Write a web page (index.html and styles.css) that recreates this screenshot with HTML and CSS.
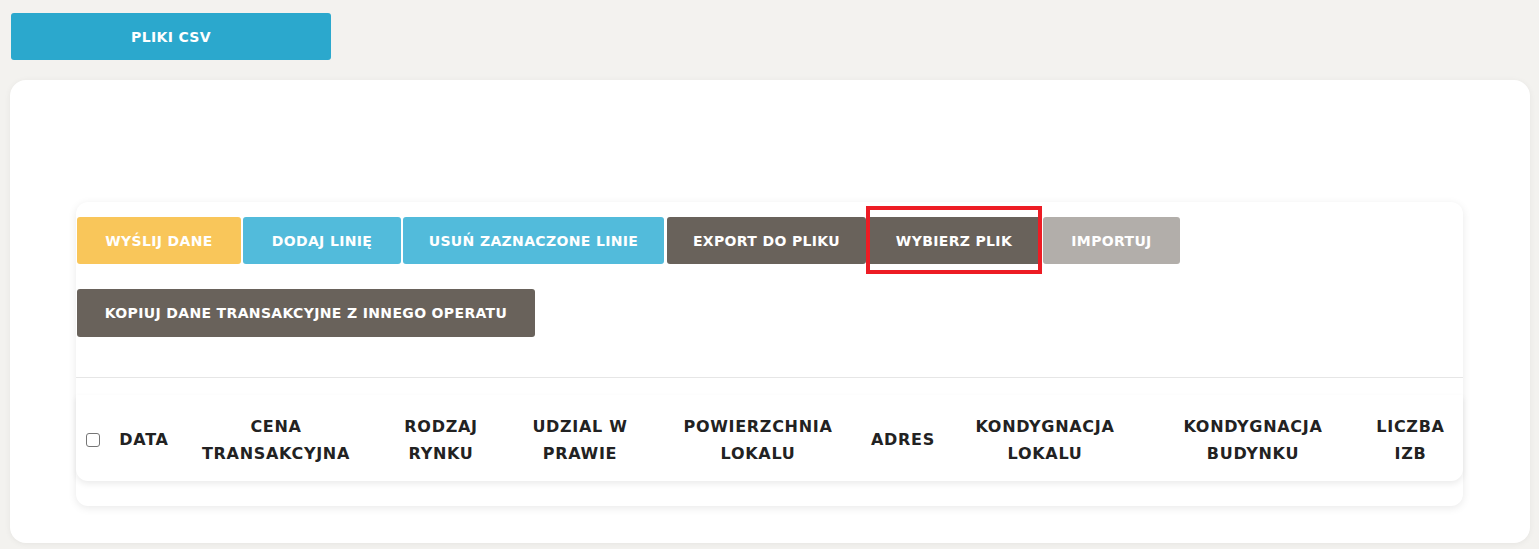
FILE: index.html
```html
<!DOCTYPE html>
<html lang="pl">
<head>
<meta charset="utf-8">
<title>Pliki CSV</title>
<link rel="stylesheet" href="styles.css">
</head>
<body>
  <div class="page">
    <button class="btn btn-csv">PLIKI CSV</button>
    <section class="panel">
      <div class="card">
        <div class="toolbar">
          <div class="btn-row">
            <button class="btn btn-yellow w-send">WYŚLIJ DANE</button>
            <button class="btn btn-blue w-add">DODAJ LINIĘ</button>
            <button class="btn btn-blue w-del">USUŃ ZAZNACZONE LINIE</button>
            <button class="btn btn-dark w-export">EXPORT DO PLIKU</button>
            <button class="btn btn-dark w-pick highlighted">WYBIERZ PLIK</button>
            <button class="btn btn-grey w-import">IMPORTUJ</button>
          </div>
          <div class="btn-row second">
            <button class="btn btn-dark w-copy">KOPIUJ DANE TRANSAKCYJNE Z INNEGO OPERATU</button>
          </div>
        </div>
        <div class="divider"></div>
        <div class="table-card">
          <div class="thead">
            <div class="th th-check"><span class="checkbox"></span></div>
            <div class="th">DATA</div>
            <div class="th">CENA<br>TRANSAKCYJNA</div>
            <div class="th">RODZAJ<br>RYNKU</div>
            <div class="th">UDZIAL W<br>PRAWIE</div>
            <div class="th">POWIERZCHNIA<br>LOKALU</div>
            <div class="th">ADRES</div>
            <div class="th">KONDYGNACJA<br>LOKALU</div>
            <div class="th">KONDYGNACJA<br>BUDYNKU</div>
            <div class="th">LICZBA<br>IZB</div>
          </div>
        </div>
      </div>
    </section>
  </div>
</body>
</html>
```
FILE: styles.css
```css
* { box-sizing: border-box; }
html, body { margin: 0; padding: 0; }
body {
  background: #f3f2ef;
  font-family: "DejaVu Sans", "Open Sans", sans-serif;
  color: #222;
}
.page {
  padding: 13px 9px 6px 10px;
}
.btn {
  display: inline-flex;
  align-items: center;
  justify-content: center;
  height: 47px;
  border: none;
  border-radius: 3px;
  color: #fff;
  font-family: inherit;
  font-weight: 700;
  font-size: 14px;
  letter-spacing: 0.35px;
  padding: 0;
  cursor: pointer;
}
.btn-csv {
  margin-left: 1px;
  width: 320px;
  background: #2ba8cd;
}
.panel {
  margin-top: 20px;
  width: 1520px;
  height: 463px;
  background: #fff;
  border-radius: 16px;
  box-shadow: 0 1px 6px rgba(0, 0, 0, 0.06);
  padding: 122px 67px 0 66px;
}
.card {
  height: 304px;
  border-radius: 12px;
  background: #fff;
  box-shadow: 0 2px 8px rgba(0, 0, 0, 0.09);
  padding-top: 15px;
}
.toolbar { padding-left: 1px; }
.btn-row {
  display: flex;
  gap: 2px;
}
.btn-row.second { margin-top: 25px; }
.btn-yellow { background: #f9c65a; }
.btn-blue { background: #52bbdb; }
.btn-dark { background: #69625b; }
.btn-grey { background: #b2aeaa; }
.w-send { width: 164px; }
.w-add { width: 158px; }
.w-del { width: 261px; }
.w-export { width: 199px; margin-left: 1px; }
.w-pick { width: 174px; margin-left: -1px; }
.w-import { width: 137px; }
.w-copy { width: 458px; height: 48px; }
.highlighted { position: relative; }
.highlighted::after {
  content: "";
  position: absolute;
  top: -11px;
  bottom: -10px;
  left: -1px;
  right: -1px;
  border: 4px solid #ed1c24;
}
.divider {
  height: 1px;
  background: #e6e6e6;
  margin-top: 40px;
}
.table-card {
  margin-top: 17px;
  height: 86px;
  background: #fff;
  border-radius: 0 0 12px 12px;
  box-shadow: 0 3px 6px rgba(0, 0, 0, 0.08);
}
.thead {
  display: grid;
  grid-template-columns: 34px 68px 196px 134px 144px 212px 78px 206px 210px 105px;
  align-items: center;
  height: 100%;
  padding-top: 3px;
}
.th {
  text-align: center;
  font-weight: 700;
  font-size: 16px;
  letter-spacing: 0.7px;
  line-height: 27px;
  color: #222;
}
.th-check {
  display: flex;
  padding-left: 10px;
}
.checkbox {
  display: block;
  width: 14px;
  height: 14px;
  border: 1px solid #767676;
  border-radius: 3px;
  background: #fff;
}
```
